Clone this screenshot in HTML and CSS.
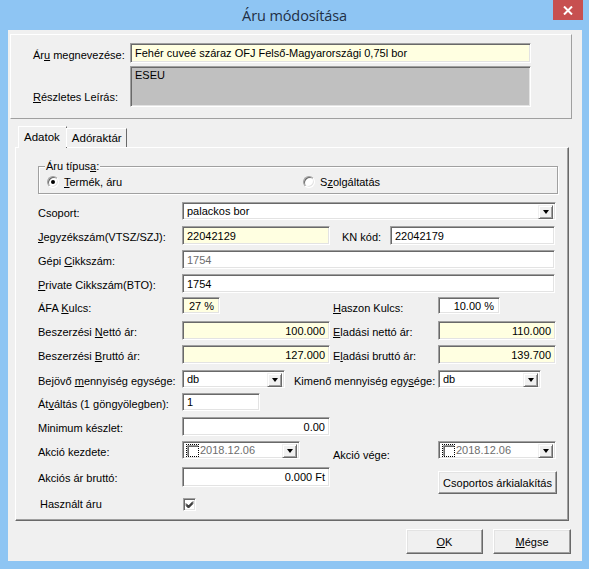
FILE: index.html
```html
<!DOCTYPE html>
<html>
<head>
<meta charset="utf-8">
<link rel="stylesheet" href="styles.css">
</head>
<body>
<div class="window">
  <div class="titlebar">
    <div></div>
    <div class="title">Áru módosítása</div>
    <div class="close"><svg width="10" height="9" viewBox="0 0 10 9"><path d="M1 0.5 L9 8.5 M9 0.5 L1 8.5" stroke="#fff" stroke-width="2"/></svg></div>
  </div>
  <div class="client">
    <div class="top-panel">
      <div class="tp-row">
        <div class="tp-label">Ár<u>u</u> megnevezése:</div>
        <div class="field sunken yellow name-field">Fehér cuveé száraz OFJ Felső-Magyarországi 0,75l bor</div>
      </div>
      <div class="tp-row">
        <div class="tp-label desc-label"><u>R</u>észletes Leírás:</div>
        <div class="field sunken gray desc-field">ESEU</div>
      </div>
    </div>

    <div class="tabs">
      <div class="tab active">Adatok</div>
      <div class="tab">Adóraktár</div>
    </div>

    <div class="tab-panel">
      <div class="groupbox">
        <div class="legend">Áru típus<u>a</u>:</div>
        <div class="radios">
          <div class="radio-item"><span class="radio checked"></span><span><u>T</u>ermék, áru</span></div>
          <div class="radio-item r2"><span class="radio"></span><span>S<u>z</u>olgáltatás</span></div>
        </div>
      </div>

      <div class="form">
        <div class="lbl r1">Csoport:</div>
        <div class="combo sunken span-all r1"><span class="ctext">palackos bor</span><span class="dd"><i></i></span></div>

        <div class="lbl r2"><u>J</u>egyzékszám(VTSZ/SZJ):</div>
        <div class="field sunken yellow f1 r2">22042129</div>
        <div class="kn r2"><span class="kn-label">KN kód:</span><div class="field sunken kn-field">22042179</div></div>

        <div class="lbl r3">Gépi <u>C</u>ikkszám:</div>
        <div class="field sunken span-all short r3 disabled">1754</div>

        <div class="lbl r4"><u>P</u>rivate Cikkszám(BTO):</div>
        <div class="field sunken span-all short r4">1754</div>

        <div class="lbl r5">ÁFA <u>K</u>ulcs:</div>
        <div class="field sunken yellow afa right r5">27 %</div>
        <div class="lbl2 r5"><u>H</u>aszon Kulcs:</div>
        <div class="field sunken haszon right r5">10.00 %</div>

        <div class="lbl r6">Beszerzési <u>N</u>ettó ár:</div>
        <div class="field sunken yellow f1 right r6">100.000</div>
        <div class="lbl2 r6"><u>E</u>ladási nettó ár:</div>
        <div class="field sunken yellow f2 right r6">110.000</div>

        <div class="lbl r7">Beszerzési <u>B</u>ruttó ár:</div>
        <div class="field sunken yellow f1 right r7">127.000</div>
        <div class="lbl2 r7">E<u>l</u>adási bruttó ár:</div>
        <div class="field sunken yellow f2 right r7">139.700</div>

        <div class="lbl r8">Bejövő <u>m</u>ennyiség egysége:</div>
        <div class="unit-row r8">
          <div class="combo sunken unit"><span class="ctext">db</span><span class="dd"><i></i></span></div>
          <span class="kim-label">Kimenő mennyiség egy<u>s</u>ége:</span>
        </div>
        <div class="combo sunken unit f2c r8"><span class="ctext">db</span><span class="dd"><i></i></span></div>

        <div class="lbl r9">Át<u>v</u>áltás (1 göngyölegben):</div>
        <div class="field sunken atv r9">1</div>

        <div class="lbl r10">Minimum készlet:</div>
        <div class="field sunken f1 right r10">0.00</div>

        <div class="lbl r11">Akció kezdete:</div>
        <div class="date sunken dp1 r11"><span class="dcheck"></span><span class="dtext">2018.12.06</span><span class="dd"><i></i></span></div>
        <div class="lbl2 vege r11">Akció vége:</div>
        <div class="date sunken f2 r11"><span class="dcheck"></span><span class="dtext">2018.12.06</span><span class="dd"><i></i></span></div>

        <div class="lbl r12">Akciós ár bruttó:</div>
        <div class="field sunken f1 right tall r12">0.000 Ft</div>
        <div class="button csop r12">Csoportos árkialakítás</div>

        <div class="lbl hasz r13">Használt áru</div>
        <div class="checkbox r13"><svg width="9" height="9" viewBox="0 0 9 9"><path d="M1 3.5 L3.5 6 L8 1.5 M1 4.5 L3.5 7 L8 2.5 M1 5.5 L3.5 8 L8 3.5" stroke="#000" stroke-width="1" fill="none"/></svg></div>
      </div>
    </div>

    <div class="bottom-buttons">
      <div class="button ok"><u>O</u>K</div>
      <div class="button cancel"><u>M</u>égse</div>
    </div>
  </div>
</div>
</body>
</html>
```

FILE: styles.css
```css
* { box-sizing: border-box; }
html, body { margin: 0; padding: 0; }
body {
  width: 589px;
  height: 569px;
  overflow: hidden;
  background: #8ec5f3;
  font-family: "Liberation Sans", Arial, sans-serif;
  font-size: 11px;
  color: #000;
}
u { text-decoration: underline; text-underline-offset: 1px; }

.window {
  width: 589px;
  height: 569px;
  background: #8ec5f3;
  display: flex;
  flex-direction: column;
}

.titlebar {
  height: 30px;
  display: grid;
  grid-template-columns: 1fr auto 1fr;
  align-items: start;
}
.title {
  font-family: "Open Sans", "Noto Sans", sans-serif;
  font-size: 14.5px;
  color: #1f2f45;
  padding-top: 6px;
  letter-spacing: -0.1px;
}
.close {
  justify-self: end;
  margin-right: 6px;
  width: 30px;
  height: 20px;
  background: #c75050;
  display: flex;
  align-items: center;
  justify-content: center;
}

.client {
  margin: 0 7px 8px 8px;
  height: 531px;
  background: #f0f0f0;
  padding: 4px 10px 0 2px;
}

/* common 3D styles */
.sunken {
  border: 1px solid;
  border-color: #a0a0a0 #ffffff #ffffff #a0a0a0;
  box-shadow: inset 1px 1px 0 #696969, inset -1px -1px 0 #e3e3e3;
  background: #fff;
}
.yellow { background: #ffffe1; }
.gray { background: #c0c0c0; }
.field {
  height: 19px;
  padding: 3px 4px 0 4px;
  white-space: nowrap;
  overflow: hidden;
  line-height: 13px;
}
.field.right { text-align: right; }
.field.disabled { color: #6d6d6d; }

/* top panel */
.top-panel {
  height: 85px;
  border: 1px solid;
  border-color: #ffffff #a0a0a0 #a0a0a0 #ffffff;
  padding: 8px 0 0 22px;
  display: flex;
  flex-direction: column;
  gap: 3px;
}
.tp-row { display: flex; }
.tp-label { width: 97px; padding-top: 6px; }
.name-field { width: 401px; height: 20px; padding-top: 3px; }
.desc-label { padding-top: 25px; }
.desc-field { width: 401px; height: 41px; padding-top: 2px; }

/* tabs */
.tabs {
  display: flex;
  margin: 7px 0 0 8px;
  height: 21px;
  align-items: flex-end;
  position: relative;
  z-index: 1;
}
.tab {
  height: 19px;
  padding: 2px 5px 0 5px;
  border: 1px solid;
  border-bottom: none;
  border-color: #ffffff #696969 transparent #ffffff;
  background: #f0f0f0;
  line-height: 14px;
  font-size: 11.5px;
}
.tab.active {
  height: 22px;
  margin-bottom: -1px;
  padding: 3px 6px 0 5px;
  margin-right: -1px;
}
.tab:not(.active) { margin-left: 0; padding-right: 4px; }

.tab-panel {
  margin: 0 0 0 5px;
  width: 554px;
  height: 374px;
  border: 1px solid;
  border-color: #ffffff #696969 #696969 #ffffff;
  box-shadow: inset -1px -1px 0 #a0a0a0;
  padding: 18px 0 0 22px;
}

.groupbox {
  width: 520px;
  height: 28px;
  border: 1px solid #a0a0a0;
  box-shadow: inset 1px 1px 0 #fff, 1px 1px 0 #fff;
  padding: 0 0 0 8px;
}
.legend {
  display: table;
  margin: -7px 0 0 -2px;
  padding: 0 1px;
  background: #f0f0f0;
  line-height: 13px;
}
.radios {
  display: flex;
  margin-top: 2px;
}
.radio-item { display: flex; align-items: center; gap: 5px; height: 14px; }
.radio-item.r2 { margin-left: 181px; }
.radio {
  width: 12px;
  height: 12px;
  border-radius: 50%;
  background: #fff;
  border: 1px solid;
  border-color: #a0a0a0 #fff #fff #a0a0a0;
  box-shadow: inset 1px 1px 0 #696969, inset -1px -1px 0 #e3e3e3;
  display: flex;
  align-items: center;
  justify-content: center;
}
.radio.checked::after {
  content: "";
  width: 4px;
  height: 4px;
  border-radius: 50%;
  background: #000;
}

/* form grid */
.form {
  margin-top: 8px;
  display: grid;
  grid-template-columns: 144px 148px 3px 105px 118px;
  grid-template-rows: 24px 24px 24px 23px 24px 24px 25px 23px 24px 24px 26px 31px 20px;
  align-items: start;
}
.lbl { grid-column: 1; padding-top: 5px; line-height: 13px; white-space: nowrap; }
.lbl2 { grid-column: 4; padding-top: 5px; line-height: 13px; white-space: nowrap; }
.lbl2.vege { padding-top: 8px; }
.r1 { grid-row: 1; } .r2 { grid-row: 2; } .r3 { grid-row: 3; } .r4 { grid-row: 4; }
.r5 { grid-row: 5; } .r6 { grid-row: 6; } .r7 { grid-row: 7; } .r8 { grid-row: 8; }
.r9 { grid-row: 9; } .r10 { grid-row: 10; } .r11 { grid-row: 11; } .r12 { grid-row: 12; }
.r13 { grid-row: 13; }

.span-all { grid-column: 2 / 6; }
.span-all.short { margin-right: 1px; }
.f1 { grid-column: 2; }
.f2 { grid-column: 5; }
.afa { grid-column: 2; width: 38px; height: 17px; padding-top: 2px; padding-right: 5px; }
.haszon { grid-column: 5; width: 62px; height: 17px; padding-top: 2px; padding-right: 5px; }
.atv { grid-column: 2; width: 78px; height: 18px; padding-top: 2px; }
.tall { height: 20px; }

.kn { grid-column: 3 / 6; display: flex; padding-left: 12px; }
.kn-label { width: 48px; padding-top: 5px; }
.kn-field { flex: 1; margin-right: 1px; }

.combo {
  height: 18px;
  display: flex;
  align-items: flex-start;
  padding: 2px 2px 0 4px;
}
.ctext { flex: 1; line-height: 13px; }
.dd {
  width: 15px;
  height: 14px;
  background: #f0f0f0;
  border: 1px solid;
  border-color: #f0f0f0 #696969 #696969 #f0f0f0;
  box-shadow: inset 1px 1px 0 #fff, inset -1px -1px 0 #a0a0a0;
  display: flex;
  align-items: center;
  justify-content: center;
}
.dd i {
  width: 0;
  height: 0;
  border-left: 3.5px solid transparent;
  border-right: 3.5px solid transparent;
  border-top: 4px solid #000;
}
.unit-row { grid-column: 2 / 5; display: flex; align-items: flex-start; }
.unit { width: 103px; }
.kim-label { margin-left: 9px; padding-top: 5px; line-height: 13px; white-space: nowrap; }
.f2c { grid-column: 5; }

.date {
  height: 18px;
  display: flex;
  align-items: flex-start;
  padding: 2px 2px 0 3px;
}
.dp1 { grid-column: 2; width: 118px; }
.dcheck {
  width: 13px;
  height: 13px;
  border: 1px dotted #000;
  background: #fff;
  box-shadow: inset 1px 1px 0 #a0a0a0, inset 2px 2px 0 #696969;
}
.dtext { flex: 1; color: #6d6d6d; padding-left: 1px; line-height: 13px; }

.button {
  border: 1px solid;
  border-color: #ffffff #696969 #696969 #ffffff;
  box-shadow: inset -1px -1px 0 #a0a0a0, inset 1px 1px 0 #e3e3e3;
  background: #f0f0f0;
  display: flex;
  align-items: center;
  justify-content: center;
  white-space: nowrap;
}
.csop { grid-column: 5; margin-top: 4px; height: 23px; width: 119px; }

.hasz { padding-left: 2px; padding-top: 0; }
.checkbox {
  grid-column: 2;
  margin-left: 1px;
  width: 13px;
  height: 13px;
  border: 1px solid;
  border-color: #a0a0a0 #fff #fff #a0a0a0;
  box-shadow: inset 1px 1px 0 #696969, inset -1px -1px 0 #e3e3e3;
  background: #fff;
  display: flex;
  align-items: center;
  justify-content: center;
}

.bottom-buttons {
  display: flex;
  justify-content: flex-end;
  gap: 10px;
  margin: 8px 0 0 0;
  width: 561px;
}
.button.ok { width: 77px; height: 25px; }
.button.cancel { width: 78px; height: 25px; }
```
